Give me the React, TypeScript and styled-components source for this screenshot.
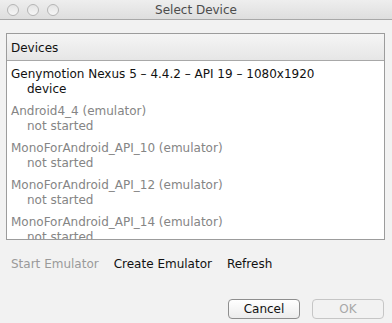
import React from "react";
import styled, { createGlobalStyle } from "styled-components";

const GlobalStyle = createGlobalStyle`
  html, body {
    margin: 0;
    padding: 0;
    background: #f2f2f2;
    font-family: "DejaVu Sans", "Liberation Sans", sans-serif;
  }
`;

const Window = styled.div`
  width: 392px;
  height: 323px;
  display: flex;
  flex-direction: column;
  background: #f2f2f2;
  overflow: hidden;
`;

const TitleBar = styled.div`
  height: 19px;
  flex: none;
  display: flex;
  align-items: center;
  position: relative;
  background: linear-gradient(#eeeeee, #dedede);
  border-bottom: 1px solid #a8a8a8;
`;

const Lights = styled.div`
  display: flex;
  gap: 8px;
  padding-left: 7px;
`;

const Light = styled.span`
  width: 10px;
  height: 10px;
  border-radius: 50%;
  border: 1px solid #b5b5b5;
  background: linear-gradient(#e4e4e4, #f6f6f6);
`;

const Title = styled.div`
  position: absolute;
  left: 0;
  right: 0;
  text-align: center;
  font-size: 12px;
  color: #4c4c4c;
`;

const Body = styled.div`
  flex: 1;
  display: flex;
  flex-direction: column;
  padding: 13px 7px 0 6px;
`;

const ListBox = styled.div`
  height: 205px;
  border: 1px solid #9c9c9c;
  background: #fff;
  display: flex;
  flex-direction: column;
  overflow: hidden;
`;

const ListHeader = styled.div`
  height: 27px;
  flex: none;
  display: flex;
  align-items: center;
  padding: 1px 0 0 4px;
  box-sizing: border-box;
  font-size: 12px;
  color: #111;
  background: linear-gradient(#f5f5f5, #e6e6e6);
  border-bottom: 1px solid #a8a8a8;
`;

const Items = styled.div`
  padding: 6px 0 0 4px;
  display: flex;
  flex-direction: column;
  gap: 7px;
`;

const Item = styled.div<{ $dim?: boolean }>`
  font-size: 12px;
  line-height: 15px;
  color: ${(p) => (p.$dim ? "#858585" : "#111")};
`;

const Sub = styled.div`
  padding-left: 16px;
`;

const Links = styled.div`
  display: flex;
  gap: 15px;
  padding: 17px 0 0 5px;
  font-size: 12px;
`;

const Link = styled.span<{ $disabled?: boolean }>`
  color: ${(p) => (p.$disabled ? "#9a9a9a" : "#111")};
`;

const Buttons = styled.div`
  display: flex;
  justify-content: flex-end;
  gap: 12px;
  padding: 28px 1px 0 0;
`;

const Button = styled.button<{ $disabled?: boolean }>`
  width: 72px;
  height: 20px;
  padding: 0;
  border-radius: 4px;
  font-family: inherit;
  font-size: 12px;
  border: 1px solid ${(p) => (p.$disabled ? "#c6c6c6" : "#8e8e8e")};
  color: ${(p) => (p.$disabled ? "#a8a8a8" : "#111")};
  background: ${(p) =>
    p.$disabled ? "#f2f2f2" : "linear-gradient(#ffffff, #ececec)"};
`;

const devices = [
  { name: "Genymotion Nexus 5 \u2013 4.4.2 \u2013 API 19 \u2013 1080x1920", sub: "device", dim: false },
  { name: "Android4_4 (emulator)", sub: "not started", dim: true },
  { name: "MonoForAndroid_API_10 (emulator)", sub: "not started", dim: true },
  { name: "MonoForAndroid_API_12 (emulator)", sub: "not started", dim: true },
  { name: "MonoForAndroid_API_14 (emulator)", sub: "not started", dim: true },
];

export default function App() {
  return (
    <>
      <GlobalStyle />
      <Window>
        <TitleBar>
          <Lights>
            <Light />
            <Light />
            <Light />
          </Lights>
          <Title>Select Device</Title>
        </TitleBar>
        <Body>
          <ListBox>
            <ListHeader>Devices</ListHeader>
            <Items>
              {devices.map((d) => (
                <Item key={d.name} $dim={d.dim}>
                  <div>{d.name}</div>
                  <Sub>{d.sub}</Sub>
                </Item>
              ))}
            </Items>
          </ListBox>
          <Links>
            <Link $disabled>Start Emulator</Link>
            <Link>Create Emulator</Link>
            <Link>Refresh</Link>
          </Links>
          <Buttons>
            <Button>Cancel</Button>
            <Button $disabled>OK</Button>
          </Buttons>
        </Body>
      </Window>
    </>
  );
}
